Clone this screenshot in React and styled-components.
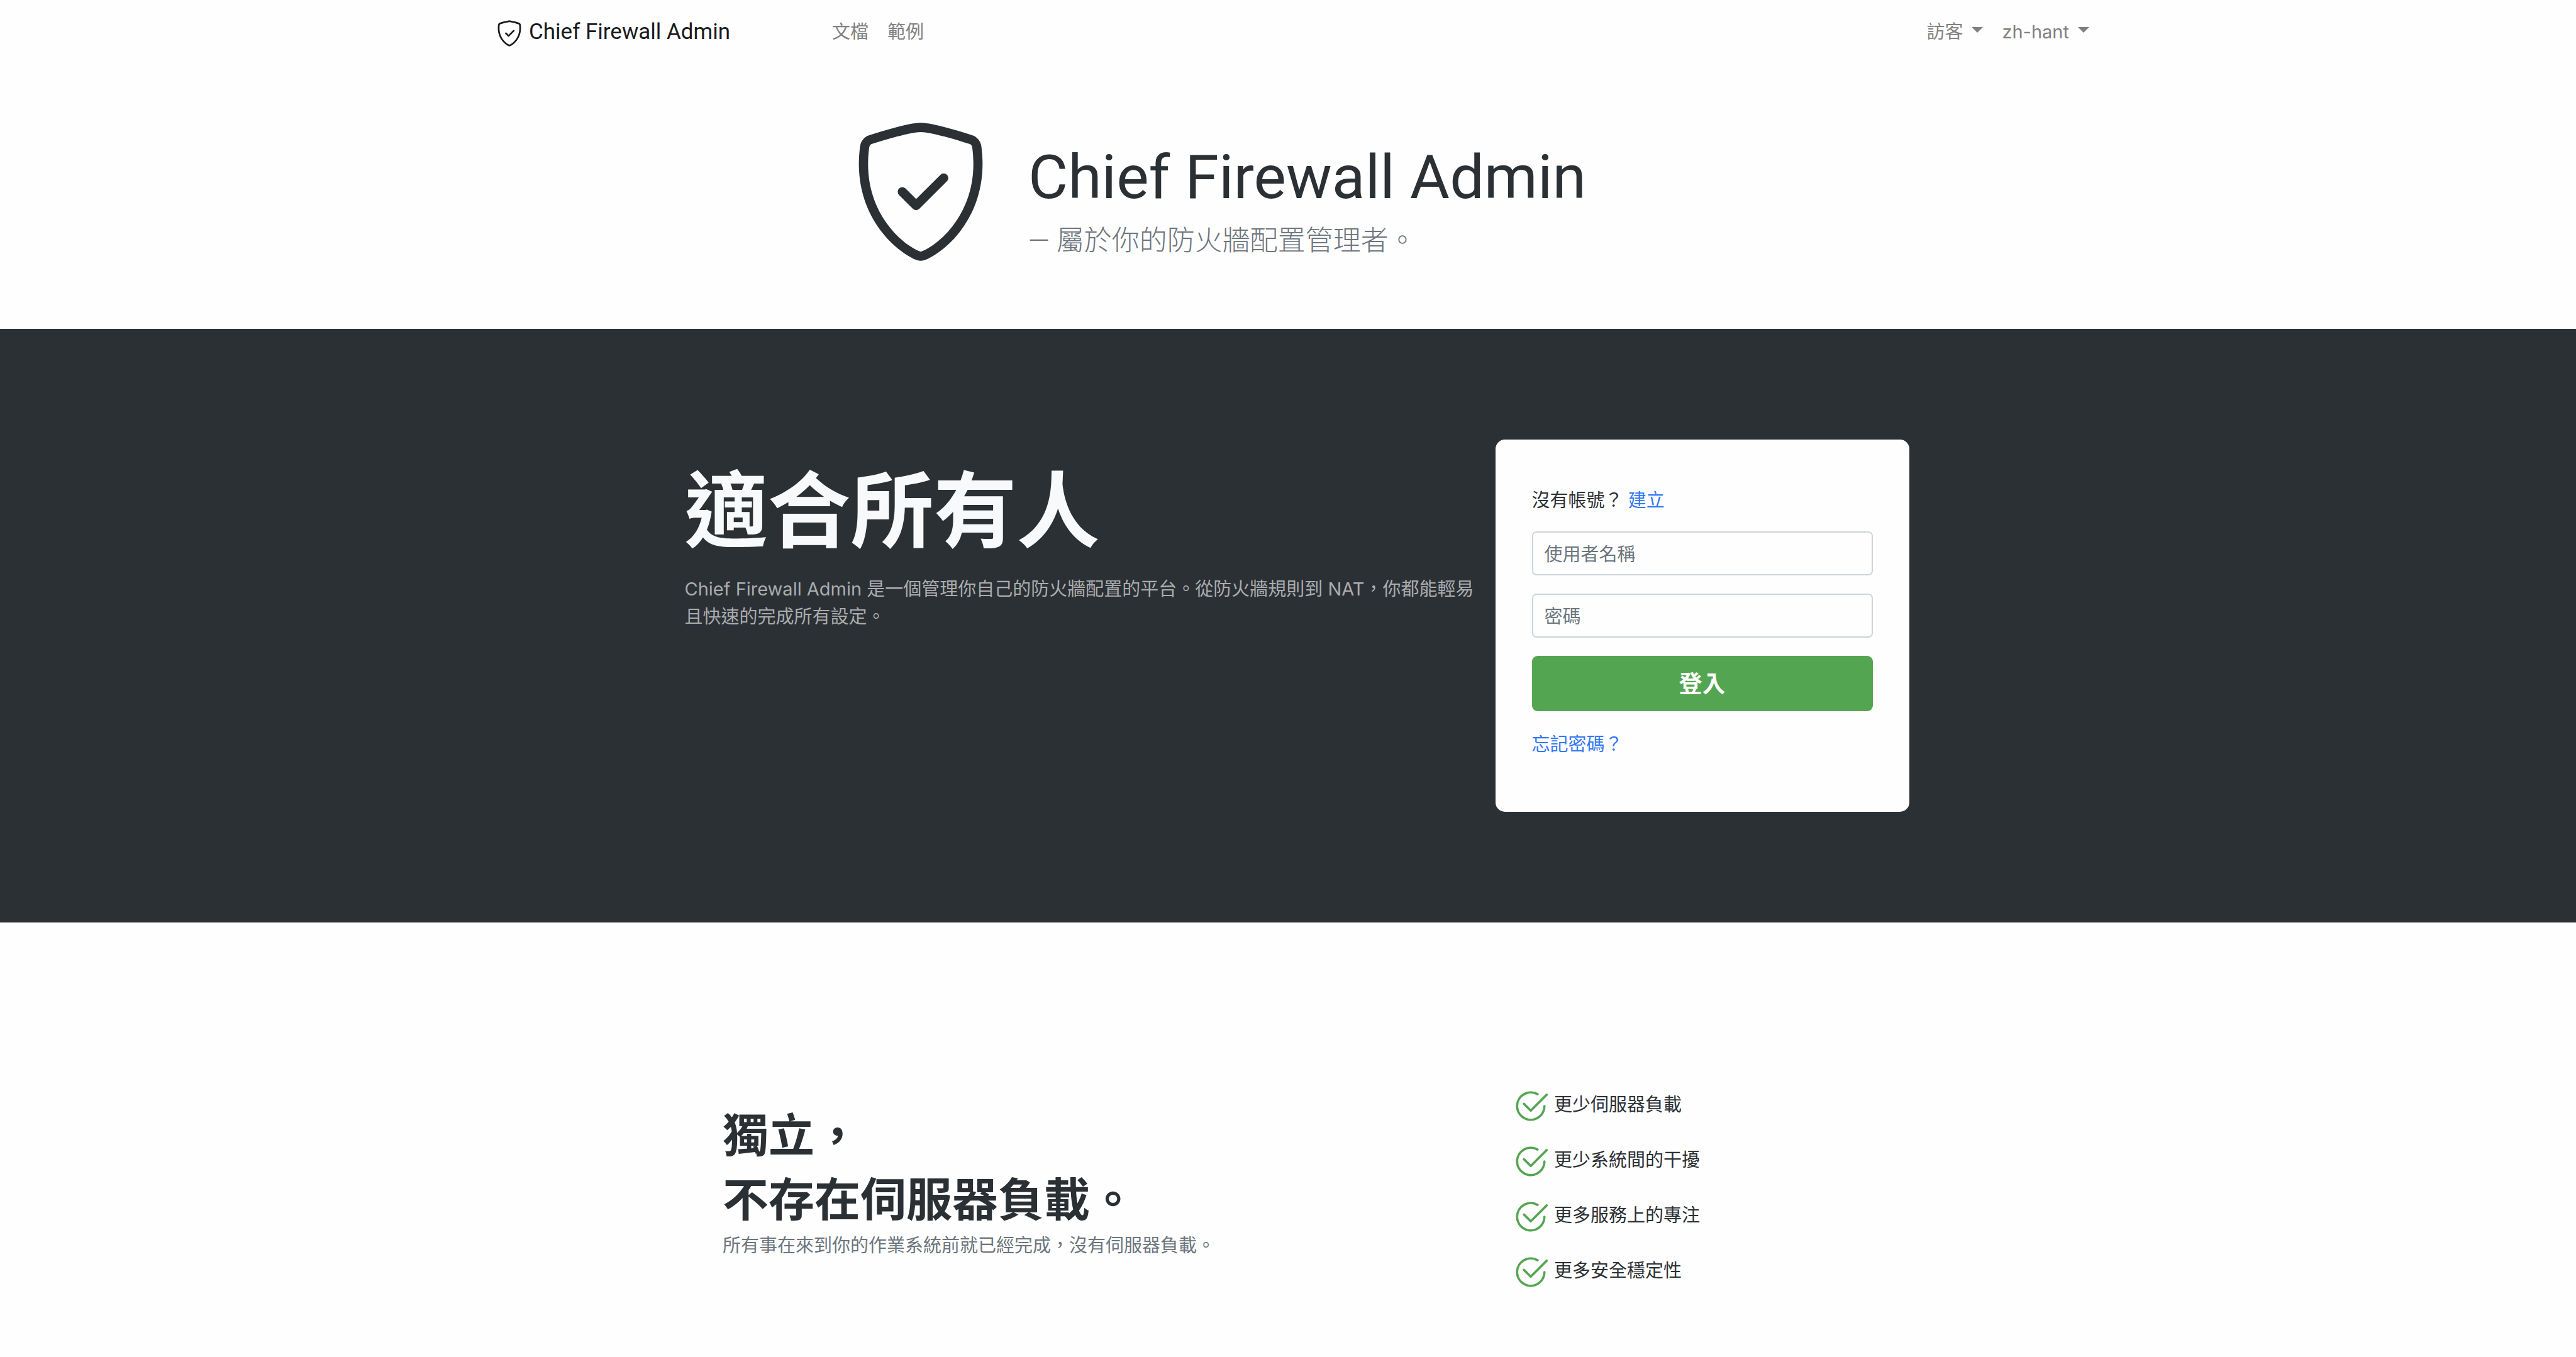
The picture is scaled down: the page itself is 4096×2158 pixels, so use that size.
import React from "react";
import styled, { createGlobalStyle } from "styled-components";

const GlobalStyle = createGlobalStyle`
  *, *::before, *::after { box-sizing: border-box; }
  body {
    margin: 0;
    background: #fefefe;
    color: #2b3035;
    font-family: Inter, "Noto Sans CJK TC", sans-serif;
    font-size: 29px;
    line-height: 44px;
  }
  h1, h2, p, ul { margin: 0; padding: 0; font-weight: inherit; }
  button, input, select { font: inherit; }
`;

const Container = styled.div`
  display: flex;
  width: 100%;
  max-width: ${(p) => p.$max}px;
  margin: 0 auto;
`;

const NavBar = styled.nav`
  padding: 27px 0;
`;

const NavRow = styled(Container)`
  align-items: center;
  padding-left: 29px;
`;

const Brand = styled.a`
  display: flex;
  align-items: center;
  gap: 9px;
  margin-right: 147px;
  color: #1b1b1c;
  font-family: Roboto, "Noto Sans CJK TC", sans-serif;
  font-size: 35px;
  line-height: 40px;
  text-decoration: none;
  white-space: nowrap;
`;

const BrandIcon = styled.span`
  display: flex;
  height: 44px;
  padding-top: 4px;
`;

const BrandName = styled.span`
  padding-top: 3px;
`;

const NavGroup = styled.div`
  display: flex;
  align-items: center;
  margin-left: ${(p) => (p.$end ? "auto" : "0")};
`;

const navItem = `
  display: flex;
  align-items: center;
  gap: 14px;
  padding: 3px 15px 0;
  border: 0;
  background: none;
  color: #808080;
  line-height: 41px;
  text-decoration: none;
  white-space: nowrap;
`;

const NavLink = styled.a`${navItem}`;
const MenuButton = styled.button`${navItem} cursor: pointer;`;
const LanguagePicker = styled.label`${navItem}`;

const LanguageSelect = styled.select`
  appearance: none;
  field-sizing: content;
  padding: 0;
  border: 0;
  background: none;
  color: inherit;
`;

const Caret = styled.span`
  border: 9px solid transparent;
  border-top-color: currentColor;
  border-bottom: 0;
  margin-bottom: 6px;
`;

const Hero = styled.header`
  padding: 90px 0 101px;
  font-family: Roboto, "Noto Sans CJK TC", sans-serif;
`;

const HeroRow = styled(Container)`
  gap: 54px;
`;

const HeroTitle = styled.h1`
  margin-top: 30px;
  font-size: 97px;
  line-height: 128px;
  white-space: nowrap;
`;

const HeroSubtitle = styled.p`
  color: #6c757d;
  font-size: 44px;
  font-weight: 300;
  line-height: 74px;
`;

const Banner = styled.section`
  padding: 176px 0;
  background: #2b3035;
`;

const Pitch = styled.div`
  flex: 1;
  padding: 32px 28px 0;
`;

const PitchTitle = styled.h2`
  margin-bottom: 22px;
  color: #f8f9fa;
  font-size: 132px;
  font-weight: 700;
  line-height: 162px;
`;

const PitchText = styled.p`
  color: #aaacae;
`;

const LoginCard = styled.form`
  display: flex;
  flex-direction: column;
  gap: 29px;
  flex: 0 0 658px;
  padding: 73px 58px 87px;
  border-radius: 15px;
  background: #fefefe;
`;

const CardLine = styled.p`
  padding-top: 3px;
  line-height: 41px;
`;

const TextLink = styled.a`
  color: #3478f6;
  text-decoration: none;
`;

const Field = styled.input`
  display: block;
  width: 100%;
  height: 70px;
  padding: 3px 18px 0;
  border: 2px solid #ced4da;
  border-radius: 7px;
  background: #fefefe;
  color: #495057;
  &::placeholder { color: #6c757d; opacity: 1; }
`;

const SubmitButton = styled.button`
  height: 88px;
  padding-top: 3px;
  border: 0;
  border-radius: 9px;
  background: #54a551;
  color: #fff;
  font-size: 37px;
  font-weight: 700;
  cursor: pointer;
`;

const Features = styled.section`
  padding: 263px 0 76px;
`;

const FeatureText = styled.div`
  flex: 0 1 1256px;
  padding-top: 25px;
`;

const FeatureTitle = styled.h2`
  font-size: 73px;
  font-weight: 700;
  line-height: 102px;
`;

const FeatureNote = styled.p`
  color: #6c757d;
`;

const BenefitList = styled.ul`
  display: flex;
  flex-direction: column;
  gap: 30px;
  list-style: none;
`;

const Benefit = styled.li`
  display: flex;
  gap: 8px;
  height: 58px;
  line-height: 54px;
  white-space: nowrap;
  svg { color: #54a551; }
`;

function ShieldCheck({ size }) {
  return (
    <svg width={size} height={size} viewBox="0 0 16 16" fill="currentColor" fillRule="evenodd" aria-hidden="true">
      <path d="M5.443 1.991a60.17 60.17 0 0 0-2.725.802.454.454 0 0 0-.315.366C1.87 7.056 3.1 9.9 4.567 11.773c.736.94 1.533 1.636 2.197 2.093.333.228.626.394.857.5.116.053.21.089.282.11A.73.73 0 0 0 8 14.5c.007-.001.038-.005.097-.023.072-.022.166-.058.282-.111.23-.106.525-.272.857-.5a10.197 10.197 0 0 0 2.197-2.093C12.9 9.9 14.13 7.056 13.597 3.159a.454.454 0 0 0-.315-.366c-.626-.2-1.682-.526-2.725-.802C9.491 1.71 8.51 1.5 8 1.5c-.51 0-1.49.21-2.557.491zm-.256-.966C6.23.749 7.337.5 8 .5c.662 0 1.77.249 2.813.525a61.09 61.09 0 0 1 2.772.815c.528.168.926.623 1.003 1.184.573 4.197-.756 7.307-2.367 9.365a11.191 11.191 0 0 1-2.418 2.3 6.942 6.942 0 0 1-1.007.586c-.27.124-.558.225-.796.225s-.526-.101-.796-.225a6.908 6.908 0 0 1-1.007-.586 11.192 11.192 0 0 1-2.417-2.3C2.167 10.331.839 7.221 1.412 3.024A1.454 1.454 0 0 1 2.415 1.84a61.11 61.11 0 0 1 2.772-.815z" />
      <path d="M10.854 6.146a.5.5 0 0 1 0 .708l-3 3a.5.5 0 0 1-.708 0l-1.5-1.5a.5.5 0 1 1 .708-.708L7.5 8.793l2.646-2.647a.5.5 0 0 1 .708 0z" />
    </svg>
  );
}

function CheckCircle() {
  return (
    <svg width="58" height="58" viewBox="0 0 16 16" fill="currentColor" aria-hidden="true">
      <path d="M2.5 8a5.5 5.5 0 0 1 8.25-4.764.5.5 0 0 0 .5-.866A6.5 6.5 0 1 0 14.5 8a.5.5 0 0 0-1 0 5.5 5.5 0 1 1-11 0z" />
      <path d="M15.354 3.354a.5.5 0 0 0-.708-.708L8 9.293 5.354 6.646a.5.5 0 1 0-.708.708l3 3a.5.5 0 0 0 .708 0l7-7z" />
    </svg>
  );
}

const benefits = ["更少伺服器負載", "更少系統間的干擾", "更多服務上的專注", "更多安全穩定性"];

export default function App() {
  return (
    <>
      <GlobalStyle />
      <NavBar>
        <NavRow $max={2578}>
          <Brand href="#">
            <BrandIcon><ShieldCheck size={44} /></BrandIcon>
            <BrandName>Chief Firewall Admin</BrandName>
          </Brand>
          <NavGroup>
            <NavLink href="#docs">文檔</NavLink>
            <NavLink href="#examples">範例</NavLink>
          </NavGroup>
          <NavGroup $end>
            <MenuButton type="button" aria-haspopup="menu">訪客<Caret /></MenuButton>
            <LanguagePicker>
              <LanguageSelect aria-label="zh-hant" defaultValue="zh-hant">
                <option>zh-hant</option>
              </LanguageSelect>
              <Caret />
            </LanguagePicker>
          </NavGroup>
        </NavRow>
      </NavBar>

      <Hero>
        <HeroRow $max={1402}>
          <ShieldCheck size={234} />
          <div>
            <HeroTitle>Chief Firewall Admin</HeroTitle>
            <HeroSubtitle>— 屬於你的防火牆配置管理者。</HeroSubtitle>
          </div>
        </HeroRow>
      </Hero>

      <Banner>
        <Container $max={1975}>
          <Pitch>
            <PitchTitle>適合所有人</PitchTitle>
            <PitchText>
              Chief Firewall Admin 是一個管理你自己的防火牆配置的平台。從防火牆規則到 NAT，你都能輕易且快速的完成所有設定。
            </PitchText>
          </Pitch>
          <LoginCard onSubmit={(e) => e.preventDefault()}>
            <CardLine>沒有帳號？ <TextLink href="#register">建立</TextLink></CardLine>
            <Field type="text" name="username" aria-label="使用者名稱" placeholder="使用者名稱" />
            <Field type="password" name="password" aria-label="密碼" placeholder="密碼" />
            <SubmitButton type="submit">登入</SubmitButton>
            <CardLine><TextLink href="#forgot">忘記密碼？</TextLink></CardLine>
          </LoginCard>
        </Container>
      </Banner>

      <Features>
        <Container $max={1798}>
          <FeatureText>
            <FeatureTitle>獨立，<br />不存在伺服器負載。</FeatureTitle>
            <FeatureNote>所有事在來到你的作業系統前就已經完成，沒有伺服器負載。</FeatureNote>
          </FeatureText>
          <BenefitList>
            {benefits.map((text) => (
              <Benefit key={text}><CheckCircle />{text}</Benefit>
            ))}
          </BenefitList>
        </Container>
      </Features>
    </>
  );
}
